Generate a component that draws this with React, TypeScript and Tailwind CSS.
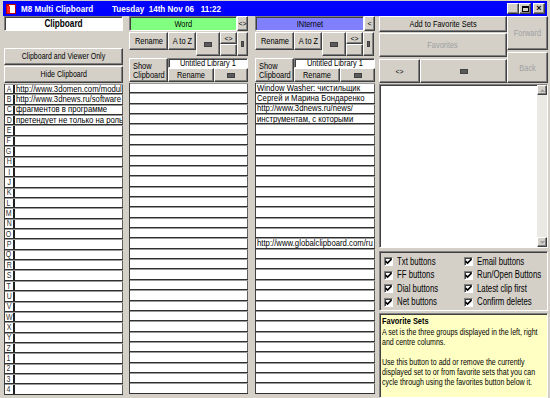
import React from "react"

const raised =
  "flex items-center justify-center bg-[#d4d0c8] border border-t-white border-l-white border-r-[#404040] border-b-[#404040] shadow-[inset_-1px_-1px_0_#808080] text-black leading-none"
const sunken =
  "border border-t-[#808080] border-l-[#808080] border-r-white border-b-white shadow-[inset_1px_1px_0_#404040]"

const labels = "ABCDEFGHIJKLMNOPQRSTUVWXYZ1234".split("")

const leftItems: Record<number, string> = {
  0: "http://www.3domen.com/modul",
  1: "http://www.3dnews.ru/software",
  2: "фрагментов в программе",
  3: "претендует не только на роль",
}

const rightItems: Record<number, string> = {
  0: "Window Washer: чистильщик",
  1: "Сергей и Марина Бондаренко",
  2: "http://www.3dnews.ru/news/",
  3: "инструментам, с которыми",
  15: "http://www.globalclipboard.com/ru",
}

// the old screenshot is squeezed sideways, so control captions are drawn narrower
function T({ children, left, className = "" }: { children: React.ReactNode; left?: boolean; className?: string }) {
  return (
    <span className={`inline-block whitespace-nowrap scale-x-[0.78] ${left ? "origin-left" : "origin-center"} ${className}`}>
      {children}
    </span>
  )
}

function Block({ w = "w-[8px]", h = "h-[5px]" }: { w?: string; h?: string }) {
  return <div className={`${w} ${h} bg-[#5a5a5a] border border-[#404040]`} />
}

function ClipList({ items, lettered }: { items: Record<number, string>; lettered?: boolean }) {
  return (
    <div className="h-[311px] flex flex-col border-l border-[#404040] bg-[#d4d0c8]">
      {labels.map((l, i) => (
        <div key={l} className="flex-1 min-h-0 flex border-t border-t-[#9a9a9a] border-b border-b-[#303030]">
          {lettered && (
            <div className="w-[10px] bg-white border-r-2 border-[#202020] flex items-center justify-center text-[9px] leading-none text-[#333]">
              <T>{l}</T>
            </div>
          )}
          <div className="flex-1 bg-white border-r border-[#606060] overflow-hidden text-[9px] leading-none flex items-center pl-[1px]">
            <T left className="!scale-x-[0.86]">{items[i] ?? ""}</T>
          </div>
        </div>
      ))}
    </div>
  )
}

function Group({ name, color, arrow }: { name: string; color: string; arrow: string }) {
  return (
    <>
      <div className="flex h-[15px]">
        <div className={`flex-1 ${color} ${sunken} flex justify-center text-[9.5px] leading-none pt-[2px]`}>
          <T>{name}</T>
        </div>
        <div className={`w-[11px] ${raised} text-[7px]`}>{arrow}</div>
      </div>
      <div className="flex h-[24px] mt-[1px]">
        <div className={`w-[39px] h-[18px] ${raised} text-[9.5px]`}>
          <T>Rename</T>
        </div>
        <div className={`w-[28px] h-[18px] ${raised} text-[9.5px]`}>
          <T>A to Z</T>
        </div>
        <div className={`w-[24px] ${raised}`}>
          <Block />
        </div>
        <div className="w-[17px] flex flex-col">
          <div className={`h-[12px] ${raised} text-[7px]`}>&lt;&gt;</div>
          <div className={`flex-1 ${raised}`} />
        </div>
        <div className={`w-[11px] ${raised}`}>
          <Block w="w-[3px]" h="h-[6px]" />
        </div>
      </div>
      <div className="flex h-[24px] mt-[2px]">
        <div className={`w-[39px] ${raised} flex-col !items-start pl-[3px] text-[9.5px] leading-[10px]`}>
          <T left>Show</T>
          <T left>Clipboard</T>
        </div>
        <div className="flex-1 flex flex-col">
          <div className={`h-[10px] bg-white ${sunken} flex items-center justify-center text-[9.5px] leading-none`}>
            <T>Untitled Library 1</T>
          </div>
          <div className="flex flex-1">
            <div className={`w-[46px] ${raised} text-[9.5px]`}>
              <T>Rename</T>
            </div>
            <div className={`flex-1 ${raised}`}>
              <Block />
            </div>
          </div>
        </div>
      </div>
    </>
  )
}

function Check({ label }: { label: string }) {
  return (
    <div className="flex items-center gap-[4px] h-[13.5px]">
      <div className={`w-[9px] h-[9px] shrink-0 bg-white ${sunken} flex items-center justify-center`}>
        <svg width="7" height="7" viewBox="0 0 7 7">
          <path d="M0.5 3 L2.5 5 L6.5 1" stroke="black" strokeWidth="1.6" fill="none" />
        </svg>
      </div>
      <span className="text-[10px] leading-none">
        <T left>{label}</T>
      </span>
    </div>
  )
}

function TitleBtn({ children }: { children: React.ReactNode }) {
  return <div className={`w-[12px] h-[11px] ${raised} text-[9px] font-bold`}>{children}</div>
}

export default function App() {
  return (
    <div className="w-[550px] h-[398px] bg-[#d4d0c8] overflow-hidden pt-[1px] px-[3px] font-['Liberation_Sans',Arial,sans-serif] text-black">
      <div className="h-[15px] bg-[#0000ff] flex items-center pl-[3px] pr-[2px] text-white">
        <svg width="10" height="10" viewBox="0 0 10 10" className="mr-[5px]">
          <rect x="0" y="0" width="10" height="10" fill="#c00000" />
          <rect x="3" y="1" width="6" height="8" fill="white" />
          <rect x="1" y="2" width="3" height="7" fill="#ff2020" />
        </svg>
        <div className="w-[91px] text-[9.5px] font-bold leading-none">
          <span className="inline-block whitespace-pre scale-x-[0.85] origin-left">M8 Multi Clipboard</span>
        </div>
        <div className="text-[9.5px] font-bold leading-none">
          <span className="inline-block whitespace-pre scale-x-[0.85] origin-left">Tuesday  14th Nov 06   11:22</span>
        </div>
        <div className="ml-auto flex">
          <TitleBtn>
            <span className="mt-[4px]">_</span>
          </TitleBtn>
          <TitleBtn>
            <div className="w-[7px] h-[6px] border border-black border-t-2" />
          </TitleBtn>
          <div className="w-[2px]" />
          <TitleBtn>×</TitleBtn>
        </div>
      </div>

      <div className="flex pl-[1px]">
        {/* left column */}
        <div className="w-[119px] flex flex-col">
          <div className={`h-[15px] bg-white ${sunken} flex items-center justify-center text-[10.5px] font-bold leading-none`}>
            <T>Clipboard</T>
          </div>
          <div className={`h-[17px] mt-[17px] ${raised} text-[9px]`}>
            <T>Clipboard and Viewer Only</T>
          </div>
          <div className={`h-[17px] mt-[1px] ${raised} text-[9px]`}>
            <T>Hide Clipboard</T>
          </div>
          <div className="mt-[1px]">
            <ClipList items={leftItems} lettered />
          </div>
        </div>

        {/* middle column */}
        <div className="w-[119px] ml-[6px] flex flex-col">
          <Group name="Word" color="bg-[#80ff80]" arrow="<>" />
          <div className="mt-[1px]">
            <ClipList items={{}} />
          </div>
        </div>

        {/* right group */}
        <div className="w-[120px] ml-[7px] flex flex-col">
          <Group name="INternet" color="bg-[#8080ff]" arrow="<" />
          <div className="mt-[1px]">
            <ClipList items={rightItems} />
          </div>
        </div>

        {/* control column */}
        <div className="w-[169px] ml-[4px] flex flex-col">
          <div className="flex h-[67px]">
            <div className="w-[128px] flex flex-col">
              <div className={`h-[16px] ${raised} text-[9.5px]`}>
                <T>Add to Favorite Sets</T>
              </div>
              <div className={`h-[24px] mt-[1px] ${raised} text-[9.5px] !text-[#a0a0a0]`}>
                <T>Favorites</T>
              </div>
              <div className="flex h-[24px] mt-[2px]">
                <div className={`w-[41px] ${raised} text-[7px]`}>&lt;&gt;</div>
                <div className={`flex-1 ${raised}`}>
                  <Block />
                </div>
              </div>
            </div>
            <div className="flex-1 flex flex-col">
              <div className={`h-[34px] ${raised} text-[9.5px] !text-[#a0a0a0]`}>
                <T>Forward</T>
              </div>
              <div className={`flex-1 mt-[2px] ${raised} text-[9.5px] !text-[#a0a0a0]`}>
                <T>Back</T>
              </div>
            </div>
          </div>

          <div className={`h-[164px] mt-[1px] bg-white ${sunken} flex justify-end`}>
            <div className="w-[10px] bg-[#ebe9e4] flex flex-col justify-between">
              <div className={`h-[10px] ${raised}`}>
                <svg width="5" height="3" viewBox="0 0 5 3">
                  <path d="M0 3 L2.5 0 L5 3 Z" fill="#a0a0a0" />
                </svg>
              </div>
              <div className={`h-[10px] ${raised}`}>
                <svg width="5" height="3" viewBox="0 0 5 3">
                  <path d="M0 0 L2.5 3 L5 0 Z" fill="#a0a0a0" />
                </svg>
              </div>
            </div>
          </div>

          <div className={`h-[60px] mt-[3px] ${sunken} grid grid-cols-[80px_1fr] pl-[4px] pt-[3px]`}>
            <div className="flex flex-col">
              <Check label="Txt buttons" />
              <Check label="FF buttons" />
              <Check label="Dial buttons" />
              <Check label="Net buttons" />
            </div>
            <div className="flex flex-col">
              <Check label="Email buttons" />
              <Check label="Run/Open Buttons" />
              <Check label="Latest clip first" />
              <Check label="Confirm deletes" />
            </div>
          </div>

          <div className={`h-[85px] mt-[2px] bg-[#ffffc4] ${sunken} px-[2px] pt-[2px] text-[9.5px] leading-[10px] flex flex-col items-start`}>
            <T left className="font-bold mb-[1px]">Favorite Sets</T>
            <T left className="!scale-x-[0.74]">A set is the three groups displayed in the left, right</T>
            <T left className="!scale-x-[0.74]">and centre columns.</T>
            <T left className="mt-[10px] !scale-x-[0.74]">Use this button to add or remove the currently</T>
            <T left className="!scale-x-[0.74]">displayed set to or from favorite sets that you can</T>
            <T left className="!scale-x-[0.74]">cycle through using the favorites button below it.</T>
          </div>
        </div>
      </div>
    </div>
  )
}
